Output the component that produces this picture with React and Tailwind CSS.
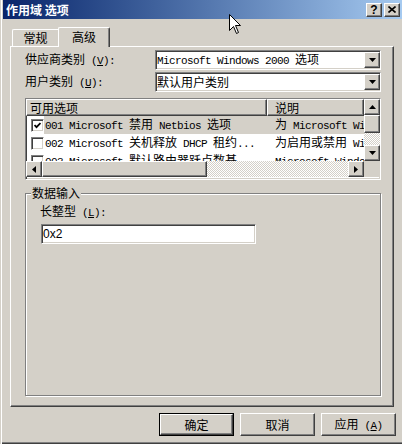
import React from 'react';

const M = "font-['Liberation_Mono',monospace] text-[11px] tracking-[-0.6px]";
const C = "font-['Noto_Sans_CJK_SC',sans-serif] text-[12px]";
const raised = "border border-t-white border-l-white border-r-[#404040] border-b-[#404040] shadow-[inset_-1px_-1px_#808080] bg-[#d4d0c8]";
const sunken = "border border-t-[#808080] border-l-[#808080] border-r-white border-b-white shadow-[inset_1px_1px_#404040,inset_-1px_-1px_#d4d0c8]";
const dither = "bg-[repeating-conic-gradient(#fff_0%_25%,#d4d0c8_0%_50%)] bg-[length:2px_2px]";

// splits text into ascii (half width) and cjk runs
const Txt = ({ s }) =>
  s.split(/([\x20-\x7e]+)/).filter(Boolean).map((p, i) =>
    /^[\x20-\x7e]+$/.test(p)
      ? <span key={i} className={M}>{p}</span>
      : <span key={i} className={C}>{p}</span>
  );

const Label = ({ pre, k, post = '):' }) => (
  <span className="whitespace-pre leading-[14px]">
    <Txt s={pre} />
    <span className={M}>(</span>
    <span className={M + ' underline'}>{k}</span>
    <span className={M}>{post}</span>
  </span>
);

const Tri = ({ dir }) => {
  const pts = {
    up: '0,4 7,4 3.5,0',
    down: '0,0 7,0 3.5,4',
    left: '4,0 4,7 0,3.5',
    right: '0,0 0,7 4,3.5',
  }[dir];
  const vert = dir === 'up' || dir === 'down';
  return (
    <svg width={vert ? 7 : 4} height={vert ? 4 : 7} viewBox={vert ? '0 0 7 4' : '0 0 4 7'}>
      <polygon points={pts} fill="#000" />
    </svg>
  );
};

const ArrowBtn = ({ dir }) => (
  <div className={`${raised} w-[16px] h-[16px] shrink-0 flex items-center justify-center`}>
    <Tri dir={dir} />
  </div>
);

const Combo = ({ children }) => (
  <div className={`${sunken} bg-white w-[226px] h-[20px] flex items-center`}>
    <div className="flex-1 pl-[1px] whitespace-pre leading-[16px] overflow-hidden">{children}</div>
    <ArrowBtn dir="down" />
  </div>
);

const Check = ({ on }) => (
  <div className={`${sunken} bg-white w-[13px] h-[13px] flex items-center justify-center`}>
    {on && (
      <svg width="7" height="7" viewBox="0 0 7 7">
        <polyline points="0.5,3 2.5,5.2 6.5,1" fill="none" stroke="#000" strokeWidth="1.8" />
      </svg>
    )}
  </div>
);

const rows = [
  { on: true, sel: true, a: '001 Microsoft 禁用 Netbios 选项', b: '为 Microsoft Windows' },
  { on: false, sel: false, a: '002 Microsoft 关机释放 DHCP 租约...', b: '为启用或禁用 Windows' },
  { on: false, sel: false, a: '003 Microsoft 默认路由器跃点数基', b: 'Microsoft Windows' },
];

const Button = ({ def, children }) =>
  def ? (
    <div className="w-[75px] h-[23px] border border-black">
      <div className={`${raised} w-full h-full flex items-center justify-center whitespace-pre`}>{children}</div>
    </div>
  ) : (
    <div className={`${raised} w-[75px] h-[23px] flex items-center justify-center whitespace-pre`}>{children}</div>
  );

export default function App() {
  return (
    <div className="relative w-[402px] h-[444px] overflow-hidden bg-[#d4d0c8] pl-[3px] flex flex-col text-black text-[12px] leading-[14px] shadow-[inset_1px_0_#d4d0c8,inset_2px_0_#fff,inset_0_-1px_#404040,inset_0_-2px_#808080]">
      {/* title bar */}
      <div className="h-[19px] shrink-0 flex items-center pl-[3px] pr-[2px] bg-linear-to-r from-[#0a246a] to-[#a6caf0]">
        <span className={`${C} font-bold text-white leading-[14px] flex-1`}>作用域 选项</span>
        <div className={`${raised} w-[16px] h-[14px] flex items-center justify-center`}>
          <span className="font-['Liberation_Sans',sans-serif] font-bold text-[12px] leading-[12px]">?</span>
        </div>
        <div className={`${raised} w-[16px] h-[14px] ml-[2px] flex items-center justify-center`}>
          <svg width="8" height="7" viewBox="0 0 8 7">
            <path d="M0.5 0.5 L7.5 6.5 M7.5 0.5 L0.5 6.5" stroke="#000" strokeWidth="1.6" />
          </svg>
        </div>
      </div>

      {/* tabs */}
      <div className="mt-[8px] h-[19px] pl-[9px] flex items-end">
        <div className="w-[46px] h-[17px] border-t border-l border-white rounded-tl-[2px] flex items-center justify-center">
          <span className={`${C} leading-[14px]`}>常规</span>
        </div>
        <div className="relative z-10 -mb-px w-[52px] h-[20px] bg-[#d4d0c8] border-t border-l border-white border-r border-r-[#404040] rounded-tl-[2px] rounded-tr-[2px] shadow-[inset_-1px_0_#808080] flex justify-center pt-[2px]">
          <span className={`${C} leading-[14px]`}>高级</span>
        </div>
      </div>

      {/* panel */}
      <div className="ml-[7px] w-[384px] h-[361px] shrink-0 border-t border-l border-white border-r border-b border-r-[#404040] border-b-[#404040] shadow-[inset_-1px_-1px_#808080] pl-[14px] pt-[3px] flex flex-col">
        <div className="flex items-center">
          <div className="w-[130px]"><Label pre="供应商类别 " k="V" /></div>
          <Combo><Txt s="Microsoft Windows 2000 选项" /></Combo>
        </div>
        <div className="flex items-center mt-[2px]">
          <div className="w-[130px]"><Label pre="用户类别 " k="U" /></div>
          <Combo><Txt s="默认用户类别" /></Combo>
        </div>

        {/* list view */}
        <div className={`${sunken} mt-[6px] w-[356px] h-[82px] bg-white flex flex-col`}>
          <div className="flex h-[62px]">
            <div className="flex-1 overflow-hidden">
              <div className="flex h-[17px]">
                <div className={`${raised} w-[241px] h-full pl-[3px] flex items-center`}>
                  <span className={`${C} leading-[14px]`}>可用选项</span>
                </div>
                <div className={`${raised} flex-1 h-full pl-[7px] flex items-center`}>
                  <span className={`${C} leading-[14px]`}>说明</span>
                </div>
              </div>
              {rows.map((r, i) => (
                <div key={i} className="flex h-[18px] items-center whitespace-pre">
                  <div className="w-[18px] pl-[5px] shrink-0"><Check on={r.on} /></div>
                  <div className={`flex-1 h-full flex items-center ${r.sel ? 'bg-[#d4d0c8]' : ''}`}>
                    <div className="w-[223px] shrink-0 pl-[1px] leading-[16px] overflow-hidden"><Txt s={r.a} /></div>
                    <div className="pl-[8px] leading-[16px]"><Txt s={r.b} /></div>
                  </div>
                </div>
              ))}
            </div>
            <div className="w-[16px] flex flex-col">
              <ArrowBtn dir="up" />
              <div className={`${raised} h-[18px]`} />
              <div className={`${dither} flex-1`} />
              <ArrowBtn dir="down" />
            </div>
          </div>
          <div className="flex h-[16px]">
            <ArrowBtn dir="left" />
            <div className={`${raised} w-[165px] h-full`} />
            <div className={`${dither} flex-1`} />
            <ArrowBtn dir="right" />
            <div className="w-[16px] bg-[#d4d0c8]" />
          </div>
        </div>

        {/* group box */}
        <div className="relative mt-[13px] w-[356px] h-[203px] border border-[#808080] shadow-[inset_1px_1px_#fff,1px_1px_#fff] pl-[14px] flex flex-col">
          <span className={`${C} absolute -top-[8px] left-[5px] px-[1px] bg-[#d4d0c8] leading-[14px]`}>数据输入</span>
          <div className="mt-[10px]"><Label pre="长整型 " k="L" /></div>
          <div className={`${sunken} bg-white mt-[4px] ml-[1px] w-[215px] h-[20px] pl-[1px] flex items-center`}>
            <span className="font-['Liberation_Sans',sans-serif] text-[12px] leading-[14px]">0x2</span>
          </div>
        </div>
      </div>

      {/* buttons */}
      <div className="mt-[6px] pr-[6px] flex justify-end gap-[6px]">
        <Button def><span className={C}>确定</span></Button>
        <Button><span className={C}>取消</span></Button>
        <Button><Label pre="应用 " k="A" post=")" /></Button>
      </div>

      {/* mouse pointer */}
      <svg className="absolute left-[229px] top-[14px]" width="13" height="21" viewBox="0 0 13 21">
        <path d="M0.5 0.5 L0.5 16.5 L4.5 12.5 L7.5 19.5 L9.5 18.5 L6.5 11.5 L11.5 11.5 Z" fill="#fff" stroke="#000" strokeWidth="1" />
      </svg>
    </div>
  );
}
